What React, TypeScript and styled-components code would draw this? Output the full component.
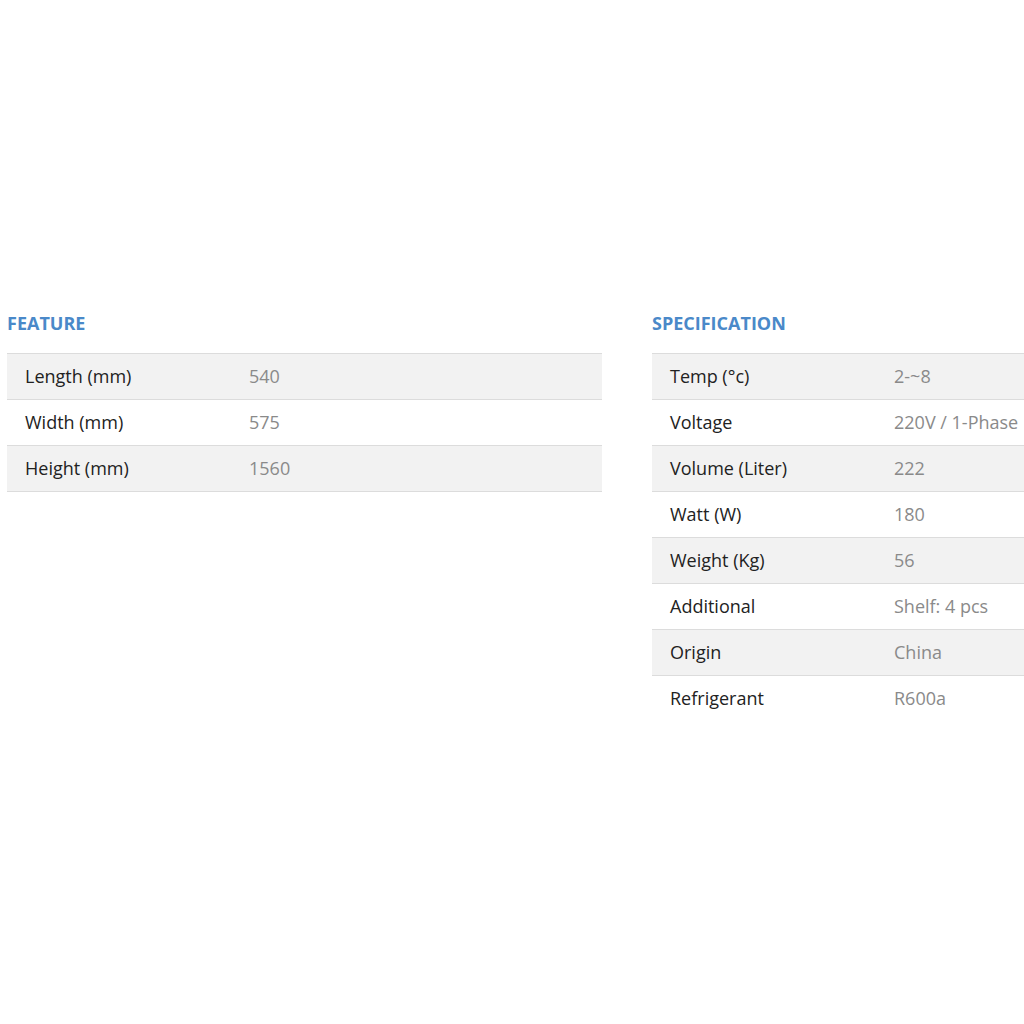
import React from "react";
import styled, { createGlobalStyle } from "styled-components";

const Global = createGlobalStyle`
  html, body {
    margin: 0;
    padding: 0;
    background: #ffffff;
    overflow: hidden;
  }
  body {
    font-family: "Open Sans", "Liberation Sans", sans-serif;
  }
`;

const Page = styled.div`
  width: 1024px;
  height: 1024px;
  overflow: hidden;
  box-sizing: border-box;
  padding: 311px 0 0 7px;
`;

const Columns = styled.div`
  display: flex;
  gap: 50px;
  align-items: flex-start;
`;

const Section = styled.section`
  flex: 0 0 595px;
  width: 595px;
`;

const Title = styled.h3`
  margin: 0 0 18px;
  font-size: 18px;
  line-height: 24px;
  font-weight: 700;
  color: #4a89c9;
  letter-spacing: 0;
`;

const Table = styled.div`
  display: flex;
  flex-direction: column;
`;

const Row = styled.div<{ $shaded: boolean }>`
  display: grid;
  grid-template-columns: 224px 1fr;
  box-sizing: content-box;
  height: 43px;
  padding-bottom: 2px;
  align-items: center;
  font-size: 18px;
  background: ${(p) => (p.$shaded ? "#f2f2f2" : "#ffffff")};
  border-top: ${(p) => (p.$shaded ? "1px solid #dcdcdc" : "none")};
  border-bottom: ${(p) => (p.$shaded ? "1px solid #dcdcdc" : "none")};
`;

const Label = styled.div`
  padding-left: 18px;
  color: #222222;
  white-space: nowrap;
`;

const Value = styled.div`
  padding-left: 18px;
  color: #8a8a8a;
  white-space: nowrap;
`;

type Item = [string, string];

const feature: Item[] = [
  ["Length (mm)", "540"],
  ["Width (mm)", "575"],
  ["Height (mm)", "1560"],
];

const spec: Item[] = [
  ["Temp (°c)", "2-~8"],
  ["Voltage", "220V / 1-Phase"],
  ["Volume (Liter)", "222"],
  ["Watt (W)", "180"],
  ["Weight (Kg)", "56"],
  ["Additional", "Shelf: 4 pcs"],
  ["Origin", "China"],
  ["Refrigerant", "R600a"],
];

const SpecTable = ({ title, items }: { title: string; items: Item[] }) => (
  <Section>
    <Title>{title}</Title>
    <Table>
      {items.map(([k, v], i) => (
        <Row key={k} $shaded={i % 2 === 0}>
          <Label>{k}</Label>
          <Value>{v}</Value>
        </Row>
      ))}
    </Table>
  </Section>
);

export default function App() {
  return (
    <>
      <Global />
      <Page>
        <Columns>
          <SpecTable title="FEATURE" items={feature} />
          <SpecTable title="SPECIFICATION" items={spec} />
        </Columns>
      </Page>
    </>
  );
}
